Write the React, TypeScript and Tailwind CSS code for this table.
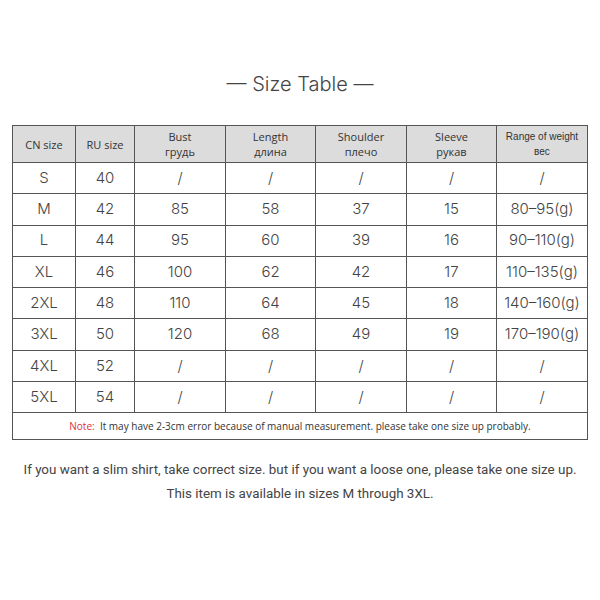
const headers: [string, string][] = [
  ["CN size", ""],
  ["RU size", ""],
  ["Bust", "грудь"],
  ["Length", "длина"],
  ["Shoulder", "плечо"],
  ["Sleeve", "рукав"],
  ["Range of weight", "вес"],
];

const rows: string[][] = [
  ["S", "40", "/", "/", "/", "/", "/"],
  ["M", "42", "85", "58", "37", "15", "80–95(g)"],
  ["L", "44", "95", "60", "39", "16", "90–110(g)"],
  ["XL", "46", "100", "62", "42", "17", "110–135(g)"],
  ["2XL", "48", "110", "64", "45", "18", "140–160(g)"],
  ["3XL", "50", "120", "68", "49", "19", "170–190(g)"],
  ["4XL", "52", "/", "/", "/", "/", "/"],
  ["5XL", "54", "/", "/", "/", "/", "/"],
];

const widths = [63, 59, 91, 90, 91, 90, 91];

export default function App() {
  return (
    <div className="w-[600px] h-[600px] bg-white text-[#444]" style={{ fontFamily: "Inter, 'Noto Sans', sans-serif" }}>
      <h1 className="pt-[70px] text-center text-[20px] font-light leading-[28px] text-[#444]">
        — Size Table —
      </h1>

      <table className="mt-[27px] ml-[12px] w-[575px] table-fixed border-collapse border-[1.5px] border-[#555]">
        <colgroup>
          {widths.map((w, i) => (
            <col key={i} style={{ width: w }} />
          ))}
        </colgroup>
        <thead>
          <tr className="h-[37px] bg-[#dcdcdc]">
            {headers.map(([en, ru], i) => (
              <th
                key={i}
                className={`border-[1.5px] border-[#555] text-center font-normal leading-[15px] text-[#333] ${i === 6 ? "text-[10px] font-['Liberation_Sans',sans-serif]" : "text-[11px] font-['Open_Sans',sans-serif]"}`}
              >
                <div>{en}</div>
                {ru && <div>{ru}</div>}
              </th>
            ))}
          </tr>
        </thead>
        <tbody>
          {rows.map((r, ri) => (
            <tr key={ri} className="h-[31.3px]">
              {r.map((c, ci) => (
                <td key={ci} className="border-[1.5px] border-[#555] text-center text-[15px] font-light text-[#444]">
                  {c}
                </td>
              ))}
            </tr>
          ))}
          <tr className="h-[27px]">
            <td colSpan={7} className="border-[1.5px] border-[#555] text-center text-[10px] font-['Open_Sans',sans-serif] text-[#333]">
              <span className="text-[#e0303a]">Note:</span>&nbsp; It may have 2-3cm error because of manual measurement. please take one size up probably.
            </td>
          </tr>
        </tbody>
      </table>

      <div className="mt-[18px] text-center text-[13.4px] leading-[24px] text-[#444]" style={{ fontFamily: "Roboto, sans-serif" }}>
        <p>If you want a slim shirt, take correct size. but if you want a loose one, please take one size up.</p>
        <p>This item is available in sizes M through 3XL.</p>
      </div>
    </div>
  );
}
